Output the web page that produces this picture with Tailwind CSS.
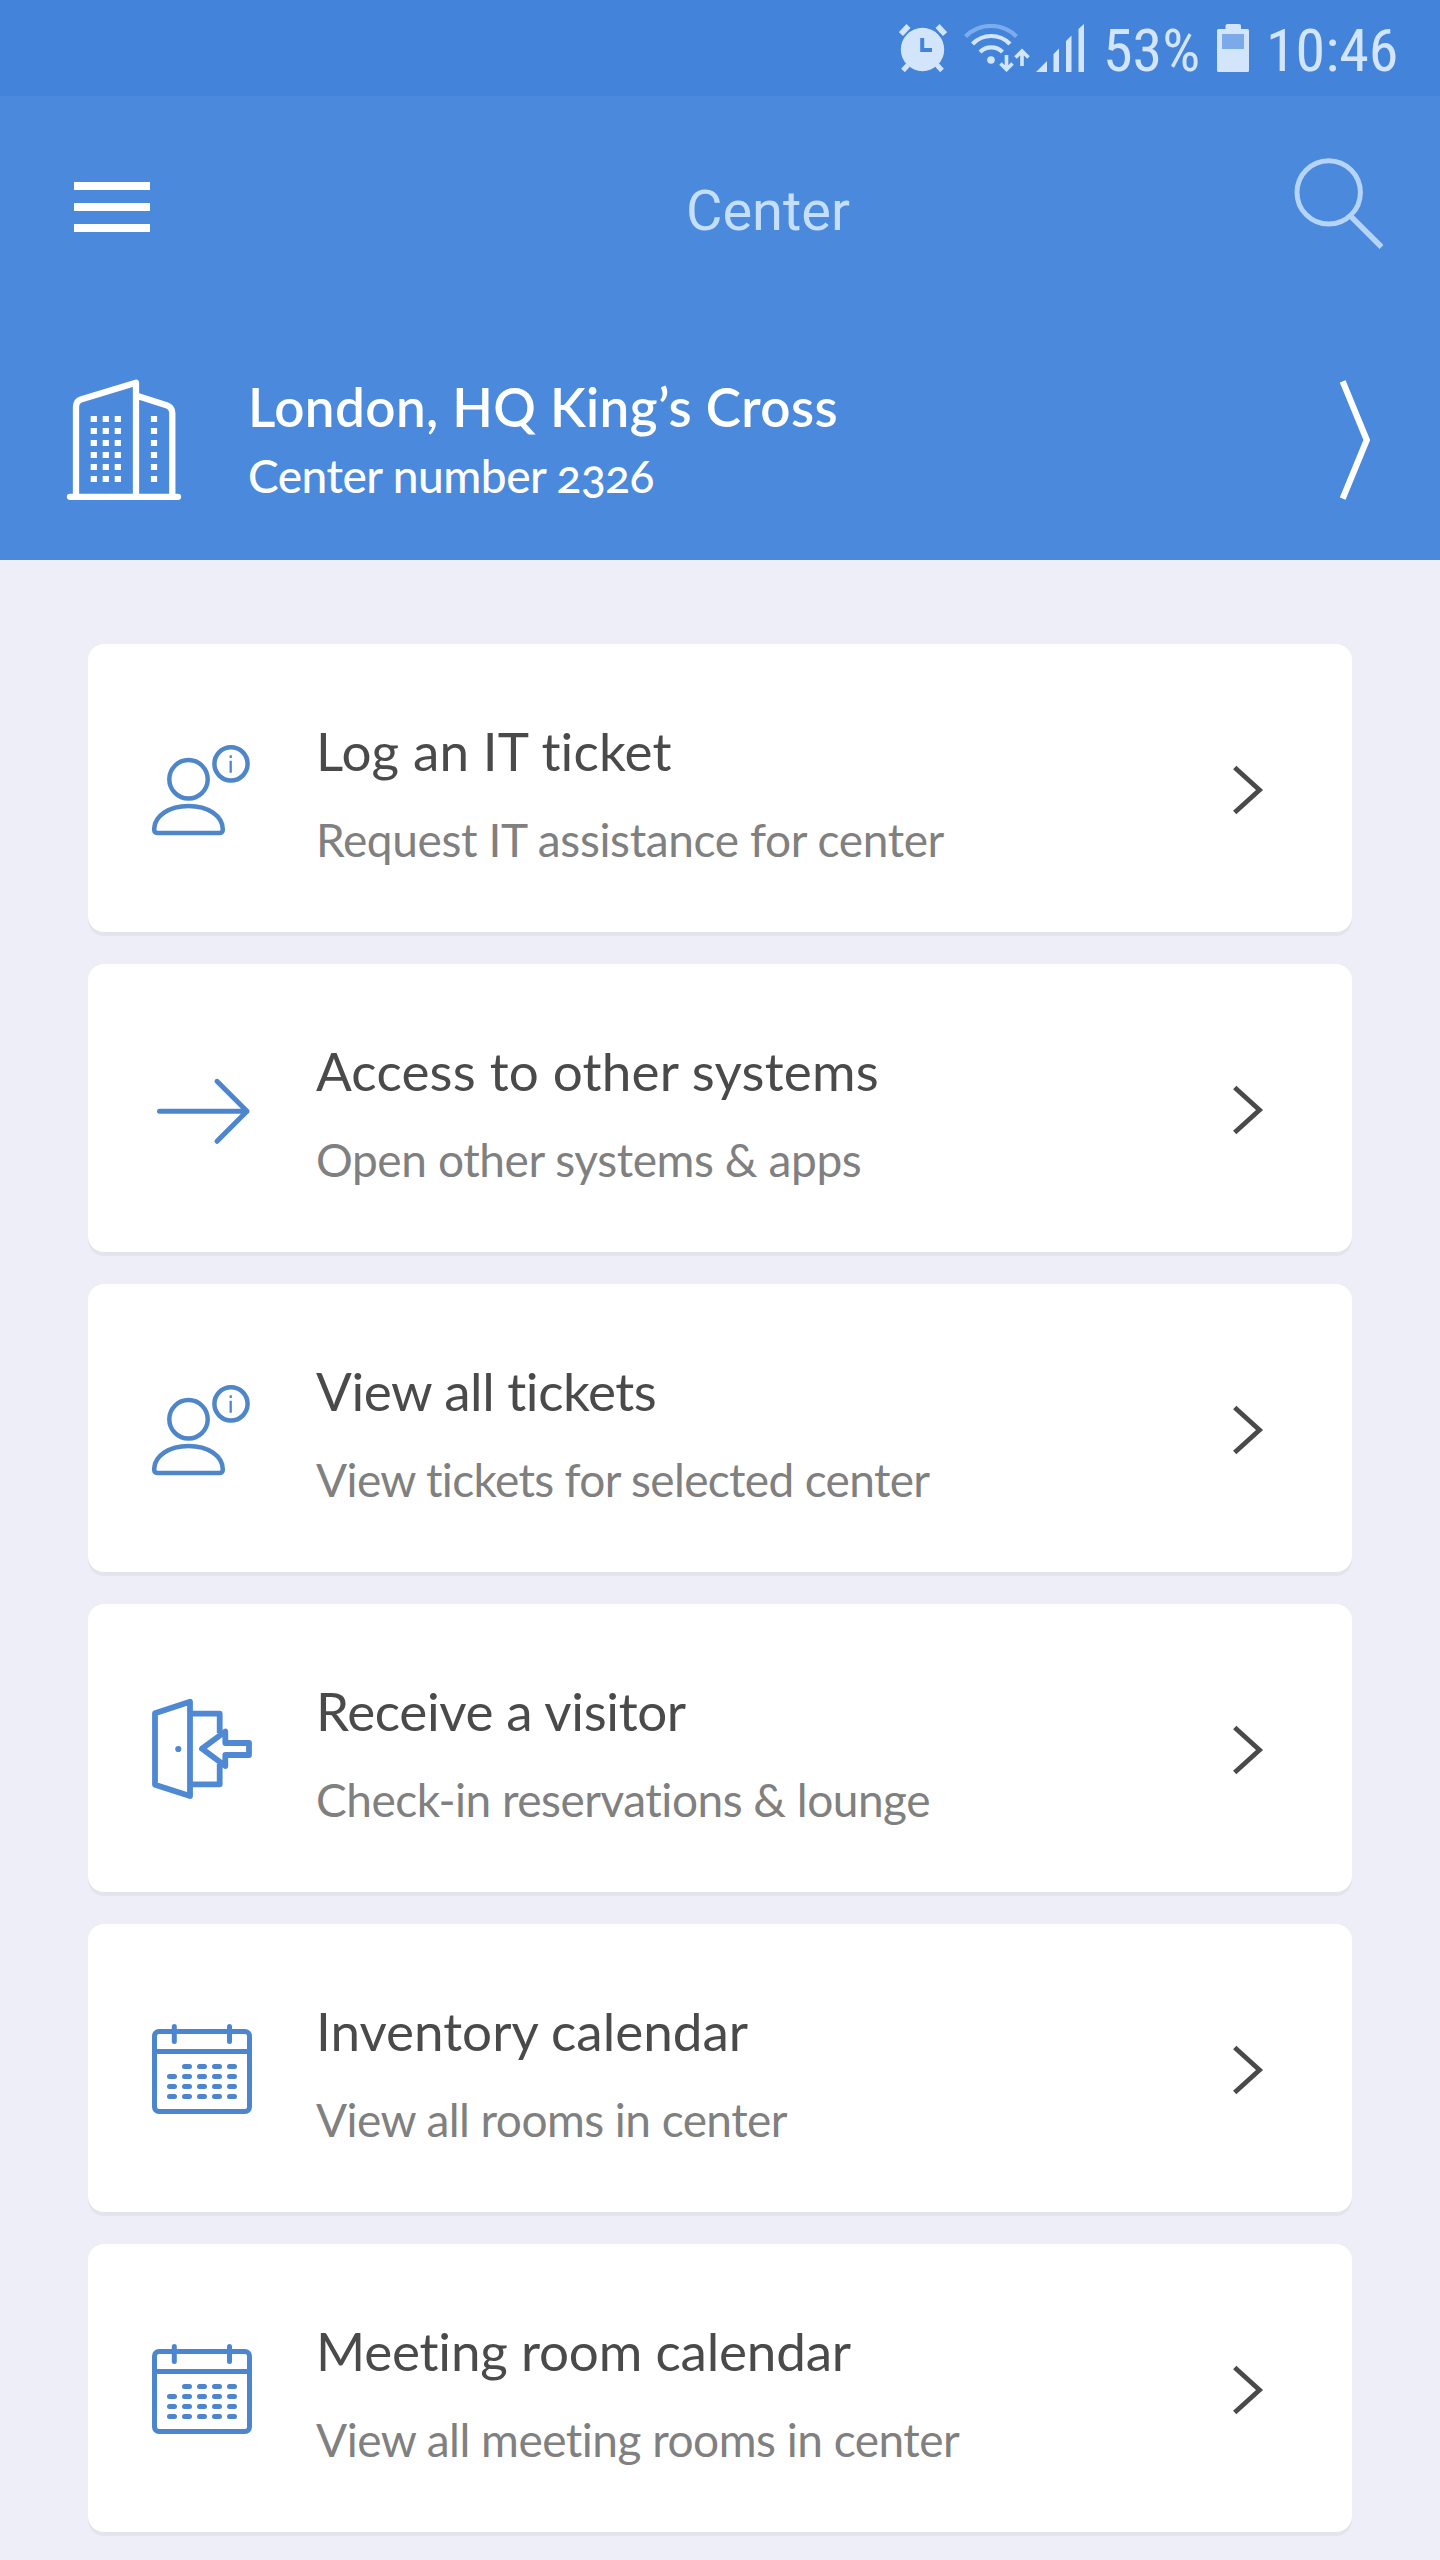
<!DOCTYPE html>
<html lang="en">
<head>
  <meta charset="UTF-8" />
  <meta name="viewport" content="width=device-width, initial-scale=1.0" />
  <title>Center</title>
  <script src="https://cdn.jsdelivr.net/npm/@tailwindcss/browser@4"></script>
</head>
<body class="antialiased bg-[#eeeef8] font-['Lato',sans-serif] [font-variant-ligatures:none]">
  <!-- Shared icons -->
  <svg class="hidden">
    <symbol id="icon-user" viewBox="0 0 104 104">
      <g fill="none" stroke="#4f86c9" stroke-width="4.5" stroke-linejoin="round">
        <circle cx="36.5" cy="41.3" r="19.2" />
        <path d="M6 95C3.500 95 2.200 93.500 2.200 91.500C2.200 78 17 68 36.500 68S70.800 78 70.800 91.500C70.800 93.500 69.500 95 67 95Z" />
        <circle cx="79" cy="25.800" r="16.600" />
      </g>
      <path d="M78.700 17.200v2.800M78.700 22.700v12" fill="none" stroke="#4f86c9" stroke-width="2.300" />
    </symbol>
    <symbol id="icon-calendar" viewBox="0 0 104 104">
      <g fill="none" stroke="#4d86cf" stroke-width="5" stroke-linecap="round">
        <rect x="2.500" y="13.500" width="95" height="80" rx="4.500" />
        <path d="M3 33.500H97M22.300 8.500V23.500M77.500 8.500V23.500" />
        <path d="M32.500 48.500h5m10 0h5m10 0h5m10 0h5M17.500 58.500h5m10 0h5m10 0h5m10 0h5m10 0h5M17.500 68.500h5m10 0h5m10 0h5m10 0h5m10 0h5M17.500 78.500h5m10 0h5m10 0h5m10 0h5m10 0h5" />
      </g>
    </symbol>
    <symbol id="icon-chevron" viewBox="0 0 32 52">
      <path d="M2.700 3.500L27.500 26L2.700 48.500" fill="none" stroke="#4a4a4a" stroke-width="4.800" />
    </symbol>
  </svg>

  <div class="h-[2560px] overflow-hidden flex flex-col">
    <!-- Status bar -->
    <div class="h-24 shrink-0 bg-[#4384da] text-[#d3e5fa] flex items-center">
      <svg class="ml-[899px] w-12 h-12 shrink-0" viewBox="0 0 48 48" fill="currentColor">
        <circle cx="23.500" cy="25.500" r="21.700" />
        <path d="M2 10L9.500 2M38.500 2L46 10" stroke="currentColor" stroke-width="5.500" />
        <path d="M9 41L4 46.500M38 41L43 46.500" stroke="currentColor" stroke-width="5" />
        <path d="M23.200 14V26H33" fill="none" stroke="#4384da" stroke-width="4" />
      </svg>
      <svg class="ml-[17px] w-[66px] h-12 shrink-0" viewBox="0 0 66 48" fill="none" stroke="currentColor">
        <path d="M1.500 12.500A36 36 0 0 1 52.500 12.500" stroke="#7cacec" stroke-width="4.200" />
        <path d="M8.500 20A26 26 0 0 1 46 20" stroke-width="4.200" />
        <path d="M16 28A16 16 0 0 1 38.500 28" stroke-width="4.200" />
        <circle cx="27" cy="36" r="3.800" fill="currentColor" stroke="none" />
        <path d="M42.500 31V45M36.500 39.500L42.500 45.500L48.500 39.500M58 42V28M51.500 33.500L58 27L64.500 33.500" stroke-width="3.600" />
      </svg>
      <svg class="ml-[6px] w-[50px] h-12 shrink-0" viewBox="0 0 50 48" fill="currentColor">
        <path d="M0 48L11 37V48ZM17.500 48V30L23 24.500V48ZM30 48V17L35.500 11.500V48ZM42.500 48V5L48 0V48Z" />
      </svg>
      <span class="ml-[17px] w-[96px] pt-[5px] text-[60px] leading-none font-['Roboto_Condensed','Roboto',sans-serif]">53%</span>
      <svg class="ml-[18px] w-8 h-12 shrink-0" viewBox="0 0 32 48" fill="currentColor">
        <rect y="5" width="32" height="43" rx="1.500" />
        <rect x="8.500" width="15.500" height="8" rx="2" />
        <rect x="5" y="10" width="22" height="15" fill="#7aaae8" />
      </svg>
      <span class="ml-[17px] pt-[5px] text-[60px] leading-none font-['Roboto_Condensed','Roboto',sans-serif]">10:46</span>
    </div>

    <!-- Header -->
    <header class="h-[464px] shrink-0 bg-[#4a89dc] text-white">
      <div class="h-[224px] flex items-center justify-between pl-[74px] pr-[57px]">
        <div class="w-[76px] mb-[2px] flex flex-col gap-[13px]">
          <div class="h-2 bg-white"></div>
          <div class="h-2 bg-white"></div>
          <div class="h-2 bg-white"></div>
        </div>
        <h1 class="ml-[93px] pt-[5px] text-[56px] leading-none text-[#c5dffb] font-['Roboto',sans-serif]">Center</h1>
        <svg class="w-[90px] h-[92px] mb-[10px]" viewBox="0 0 90 92" fill="none" stroke="#b5d4f8" stroke-width="5">
          <circle cx="35.700" cy="35.400" r="31.700" />
          <path d="M57.500 59L88.500 90" stroke-width="5.500" />
        </svg>
      </div>
      <div class="h-[240px] flex pl-[66px]">
        <svg class="mt-[58px] w-[116px] h-[124px] shrink-0" viewBox="0 0 116 124" fill="none" stroke="currentColor" stroke-width="6.300" stroke-linecap="round" stroke-linejoin="round">
          <path d="M10 117V29Q10 23 15.500 21.300L70 4.700V117M70 17.500L100.500 27.200Q106.300 29.200 106.300 35V117M4 118.800H112" />
          <g stroke-width="6.200" stroke-linecap="butt" stroke-dasharray="6 6">
            <path d="M27.800 38V106M39.800 38V106M51.800 38V106M88 38V106" />
          </g>
        </svg>
        <div class="ml-[66px] pt-[57px] flex-1">
          <h2 class="text-[53px] leading-[60px] font-semibold tracking-[0.4px]">London, HQ King’s Cross</h2>
          <p class="mt-[9px] text-[46px] leading-[60px] font-medium tracking-[-0.5px] [font-variant-numeric:oldstyle-nums]">Center number 2326</p>
        </div>
        <svg class="mt-[58px] mr-[68px] w-8 h-[124px] shrink-0" viewBox="0 0 32 124" fill="none" stroke="currentColor" stroke-width="6.200">
          <path d="M2.700 3.500L26.800 62L2.700 120.500" />
        </svg>
      </div>
    </header>

    <!-- Menu cards -->
    <main class="pt-[84px] px-[88px] flex flex-col gap-8">
      <a href="#" class="h-[288px] shrink-0 flex bg-white rounded-2xl shadow-[0_4px_0_#e4e4ee] pl-16 pr-[88px]">
        <svg class="mt-[94px] w-[104px] h-[104px]"><use href="#icon-user" /></svg>
        <div class="ml-[60px] pt-[71px] flex-1 whitespace-nowrap">
          <h3 class="text-[53px] leading-[72px] text-[#4a4a4a] tracking-[0.15px]">Log an IT ticket</h3>
          <p class="mt-[21px] text-[46px] leading-[64px] text-[#808080] tracking-[-0.37px]">Request IT assistance for center</p>
        </div>
        <svg class="mt-[120px] w-8 h-[52px]"><use href="#icon-chevron" /></svg>
      </a>
      <a href="#" class="h-[288px] shrink-0 flex bg-white rounded-2xl shadow-[0_4px_0_#e4e4ee] pl-16 pr-[88px]">
        <svg class="mt-[94px] w-[104px] h-[104px]" viewBox="0 0 104 104" fill="none" stroke="#4d86cf" stroke-width="5" stroke-linecap="round" stroke-linejoin="round">
          <path d="M7.500 53.300H95M65 23.300L95 53.300L65 83.300" />
        </svg>
        <div class="ml-[60px] pt-[71px] flex-1 whitespace-nowrap">
          <h3 class="text-[53px] leading-[72px] text-[#4a4a4a] tracking-[0.2px]">Access to other systems</h3>
          <p class="mt-[21px] text-[46px] leading-[64px] text-[#808080] tracking-[-0.4px]">Open other systems &amp; apps</p>
        </div>
        <svg class="mt-[120px] w-8 h-[52px]"><use href="#icon-chevron" /></svg>
      </a>
      <a href="#" class="h-[288px] shrink-0 flex bg-white rounded-2xl shadow-[0_4px_0_#e4e4ee] pl-16 pr-[88px]">
        <svg class="mt-[94px] w-[104px] h-[104px]"><use href="#icon-user" /></svg>
        <div class="ml-[60px] pt-[71px] flex-1 whitespace-nowrap">
          <h3 class="text-[53px] leading-[72px] text-[#4a4a4a] tracking-[-0.45px]">View all tickets</h3>
          <p class="mt-[21px] text-[46px] leading-[64px] text-[#808080] tracking-[-0.65px]">View tickets for selected center</p>
        </div>
        <svg class="mt-[120px] w-8 h-[52px]"><use href="#icon-chevron" /></svg>
      </a>
      <a href="#" class="h-[288px] shrink-0 flex bg-white rounded-2xl shadow-[0_4px_0_#e4e4ee] pl-16 pr-[88px]">
        <svg class="mt-[94px] w-[104px] h-[104px]" viewBox="0 0 104 104" fill="none" stroke="#4f88d3" stroke-width="5.800" stroke-linejoin="round">
          <path d="M3 15.300L38 3.700V98L3 86.700ZM38 15.700H67.700V35M67.700 66V86.300H38" />
          <path d="M50 50.700L73.300 33.500V45H97V57H73.300V68Z" />
          <circle cx="26.300" cy="51" r="3.100" fill="#4f88d3" stroke="none" />
        </svg>
        <div class="ml-[60px] pt-[71px] flex-1 whitespace-nowrap">
          <h3 class="text-[53px] leading-[72px] text-[#4a4a4a] tracking-[-0.35px]">Receive a visitor</h3>
          <p class="mt-[21px] text-[46px] leading-[64px] text-[#808080] tracking-[-0.5px]">Check-in reservations &amp; lounge</p>
        </div>
        <svg class="mt-[120px] w-8 h-[52px]"><use href="#icon-chevron" /></svg>
      </a>
      <a href="#" class="h-[288px] shrink-0 flex bg-white rounded-2xl shadow-[0_4px_0_#e4e4ee] pl-16 pr-[88px]">
        <svg class="mt-[94px] w-[104px] h-[104px]"><use href="#icon-calendar" /></svg>
        <div class="ml-[60px] pt-[71px] flex-1 whitespace-nowrap">
          <h3 class="text-[53px] leading-[72px] text-[#4a4a4a]">Inventory calendar</h3>
          <p class="mt-[21px] text-[46px] leading-[64px] text-[#808080] tracking-[-0.55px]">View all rooms in center</p>
        </div>
        <svg class="mt-[120px] w-8 h-[52px]"><use href="#icon-chevron" /></svg>
      </a>
      <a href="#" class="h-[288px] shrink-0 flex bg-white rounded-2xl shadow-[0_4px_0_#e4e4ee] pl-16 pr-[88px]">
        <svg class="mt-[94px] w-[104px] h-[104px]"><use href="#icon-calendar" /></svg>
        <div class="ml-[60px] pt-[71px] flex-1 whitespace-nowrap">
          <h3 class="text-[53px] leading-[72px] text-[#4a4a4a] tracking-[-0.2px]">Meeting room calendar</h3>
          <p class="mt-[21px] text-[46px] leading-[64px] text-[#808080] tracking-[-0.5px]">View all meeting rooms in center</p>
        </div>
        <svg class="mt-[120px] w-8 h-[52px]"><use href="#icon-chevron" /></svg>
      </a>
    </main>
  </div>
</body>
</html>
